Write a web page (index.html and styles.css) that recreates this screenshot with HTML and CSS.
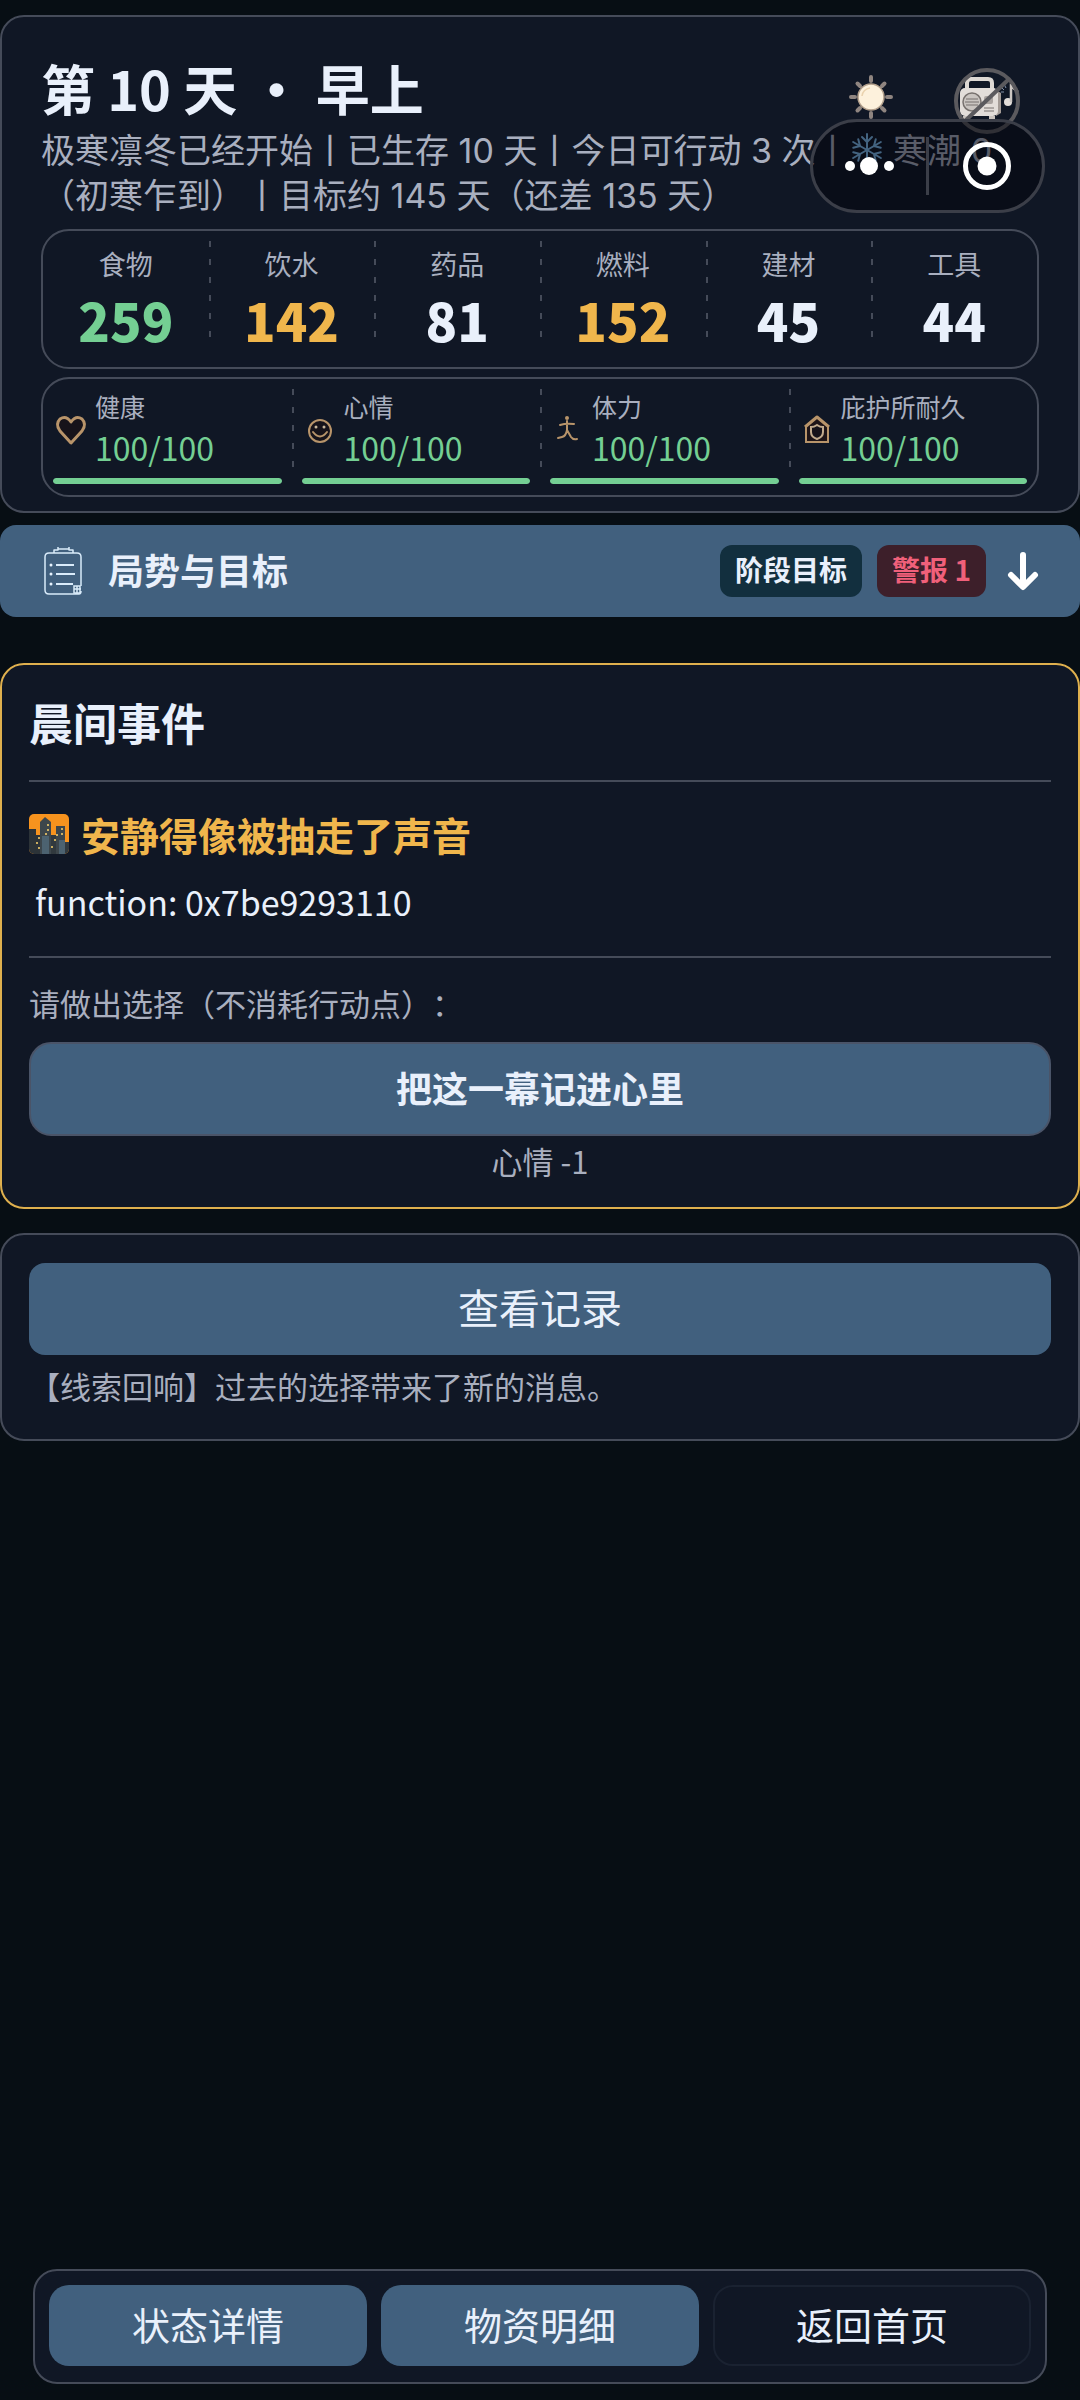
FILE: index.html
```html
<!DOCTYPE html>
<html lang="zh-CN">
<head>
<meta charset="utf-8">
<meta name="viewport" content="width=device-width, initial-scale=1">
<title>第 10 天 · 早上</title>
<link rel="stylesheet" href="styles.css">
</head>
<body>
<div class="app">
  <header class="card status">
    <div class="status-top">
      <h1 class="day">第 10 天 · 早上</h1>
      <div class="tools">
        <button class="tool" type="button" aria-label="主题">
          <svg width="46" height="46" viewBox="0 0 46 46">
            <g stroke="#8f8580" stroke-width="4" stroke-linecap="round">
              <path d="M23 3v4M23 39v4M3 23h4M39 23h4M9.500 9.500l2.500 2.500M34 34l2.500 2.500M9.500 36.500l2.500-2.500M34 12l2.500-2.500"/>
            </g>
            <circle cx="23" cy="23" r="13" fill="#fdf1dc" stroke="#b3a08c" stroke-width="1.500"/>
            <path d="M14 22a9 9 0 0 1 8-8" fill="none" stroke="#ead2ae" stroke-width="1.500"/>
          </svg>
        </button>
        <button class="tool" type="button" aria-label="音乐已关闭">
          <svg width="68" height="68" viewBox="0 0 68 68">
            <path d="M14 23v-6q0-4 4-4h17q4 0 4 4v6" fill="none" stroke="#ddd8d3" stroke-width="4"/>
            <path d="M43 24l5 3v20l-5 3z" fill="#a39b96"/>
            <rect x="7" y="22" width="38" height="28" rx="5" fill="#e2ddd9"/>
            <path d="M10 50h6v3h-6zM36 50h6v3h-6z" fill="#c9c3be"/>
            <circle cx="19" cy="36" r="9" fill="#c9c4c0" stroke="#77716e" stroke-width="1.500"/>
            <path d="M13 33h12M12 36h14M13 39h12" stroke="#77716e" stroke-width="1"/>
            <rect x="31" y="30" width="9" height="8" rx="2" fill="#a9a3a0"/>
            <path d="M31 42h10M31 45h10" stroke="#77716e" stroke-width="1"/>
            <circle cx="55" cy="36" r="4" fill="#e2ddd9"/>
            <path d="M58 36V20l7 6" fill="none" stroke="#ccc6c2" stroke-width="2.500"/>
            <path d="M48 21l3 3M51 18l2 4M48 26h3" stroke="#8292aa" stroke-width="1"/>
            <circle cx="34" cy="35" r="31" fill="none" stroke="#5b5a5e" stroke-width="4"/>
            <path d="M12 55L56 13" stroke="#5b5a5e" stroke-width="4"/>
          </svg>
        </button>
      </div>
    </div>
    <p class="summary">极寒凛冬已经开始丨已生存 10 天丨今日可行动 3 次丨<svg class="snow" width="34" height="34" viewBox="0 0 34 34" role="img" aria-label="雪"><g fill="none" stroke="#7fbdec" stroke-width="2" stroke-linecap="round"><g id="arm"><path d="M17 17V1M12 4l5 5 5-5"/></g><use href="#arm" transform="rotate(60 17 17)"/><use href="#arm" transform="rotate(120 17 17)"/><use href="#arm" transform="rotate(180 17 17)"/><use href="#arm" transform="rotate(240 17 17)"/><use href="#arm" transform="rotate(300 17 17)"/></g></svg> 寒潮 0（初寒乍到）丨目标约 145 天（还差 135 天）</p>

    <dl class="panel resources">
      <div class="resource"><dt>食物</dt><dd class="good">259</dd></div>
      <div class="resource"><dt>饮水</dt><dd class="warn">142</dd></div>
      <div class="resource"><dt>药品</dt><dd>81</dd></div>
      <div class="resource"><dt>燃料</dt><dd class="warn">152</dd></div>
      <div class="resource"><dt>建材</dt><dd>45</dd></div>
      <div class="resource"><dt>工具</dt><dd>44</dd></div>
    </dl>

    <div class="panel vitals">
      <div class="vital">
        <div class="vital-row">
          <svg class="vital-icon" viewBox="0 0 36 36"><path d="M18 31L7 19q-5-7 0-12 6-4 11 3 5-7 11-3 5 5 0 12z" fill="#17131a" stroke="#b8946a" stroke-width="3" stroke-linejoin="round"/></svg>
          <div><label class="vital-name" for="health">健康</label><div class="vital-value">100/100</div></div>
        </div>
        <progress id="health" max="100" value="100"></progress>
      </div>
      <div class="vital">
        <div class="vital-row">
          <svg class="vital-icon" viewBox="0 0 36 36"><circle cx="18" cy="19" r="11" fill="#17131a" stroke="#b8946a" stroke-width="2"/><circle cx="14" cy="15" r="1.500" fill="#c9b79c"/><circle cx="22" cy="15" r="1.500" fill="#c9b79c"/><path d="M11 20q7 9 14 0" fill="none" stroke="#b8946a" stroke-width="2" stroke-linecap="round"/></svg>
          <div><label class="vital-name" for="mood">心情</label><div class="vital-value">100/100</div></div>
        </div>
        <progress id="mood" max="100" value="100"></progress>
      </div>
      <div class="vital">
        <div class="vital-row">
          <svg class="vital-icon" viewBox="0 0 36 36"><g fill="none" stroke="#b8946a" stroke-width="2" stroke-linecap="round" stroke-linejoin="round"><path d="M17 9v9M10 13q6-2 14-1M17 18q-1 6-5 7l-4 1M17 18l4 7q2 3 6 2"/></g><circle cx="17" cy="6" r="2" fill="#b8946a"/></svg>
          <div><label class="vital-name" for="stamina">体力</label><div class="vital-value">100/100</div></div>
        </div>
        <progress id="stamina" max="100" value="100"></progress>
      </div>
      <div class="vital">
        <div class="vital-row">
          <svg class="vital-icon" viewBox="0 0 36 36"><path d="M7 15v15h22V15" fill="#1e1417" stroke="#b8946a" stroke-width="2"/><path d="M6 15L18 5l12 10" fill="#1e1417" stroke="#b8946a" stroke-width="3" stroke-linejoin="round"/><path d="M18 13q3 2 6 2v5q0 5-6 7-6-2-6-7v-5q3 0 6-2z" fill="#17131a" stroke="#c2ab8d" stroke-width="2"/></svg>
          <div><label class="vital-name" for="shelter">庇护所耐久</label><div class="vital-value">100/100</div></div>
        </div>
        <progress id="shelter" max="100" value="100"></progress>
      </div>
    </div>

    <div class="capsule">
      <button class="capsule-button" type="button" aria-label="更多">
        <svg width="52" height="22" viewBox="0 0 52 22" fill="#fff"><circle cx="6" cy="11" r="5"/><circle cx="25" cy="11" r="9"/><circle cx="45" cy="11" r="5"/></svg>
      </button>
      <span class="capsule-line"></span>
      <button class="capsule-button" type="button" aria-label="关闭">
        <svg width="50" height="50" viewBox="0 0 50 50"><circle cx="26" cy="25" r="21.500" fill="none" stroke="#fff" stroke-width="5"/><circle cx="26" cy="25" r="9.500" fill="#fff"/></svg>
      </button>
    </div>
  </header>

  <button class="outlook" type="button" aria-expanded="false">
    <svg class="clipboard" width="38" height="50" viewBox="0 0 38 50" fill="none" stroke="#d9ebfa" stroke-width="1.500">
      <path d="M31 48H5q-4 0-4-4V11q0-4 4-4h28q4 0 4 4v29M10 7V4h4V1M14 3h11M25 1v3h4v3" stroke-linejoin="round"/>
      <g stroke-width="2"><path d="M12 19h18M12 28h19M12 38h17"/></g>
      <path d="M30 40h6v7h-6zM30 43h7M33 40v7M31 48h4q2 0 2-3"/>
      <g fill="#e9f4ff" stroke="none"><circle cx="7" cy="19" r="1.500"/><circle cx="7" cy="28" r="1.500"/><circle cx="7" cy="38" r="1.500"/></g>
    </svg>
    <span class="outlook-title">局势与目标</span>
    <span class="chip">阶段目标</span>
    <span class="chip chip-alert">警报 1</span>
    <svg class="arrow" width="32" height="40" viewBox="0 0 32 40" fill="none" stroke="#fff" stroke-width="6" stroke-linecap="round" stroke-linejoin="round"><path d="M16 4v31M4 24l12 12 12-12"/></svg>
  </button>

  <main>
    <section class="card event">
      <h2 class="event-heading">晨间事件</h2>
      <hr>
      <h3 class="event-title">
        <svg width="40" height="40" viewBox="0 0 40 40" aria-hidden="true">
          <defs><clipPath id="tile"><rect width="40" height="40" rx="5"/></clipPath></defs>
          <g clip-path="url(#tile)">
            <path fill="#f7931e" d="M0 0h40v40H0z"/>
            <path fill="#2c3338" d="M0 15h7v6h5v19H0z"/>
            <path fill="#3d464b" d="M11 8l5-5 6 5v32H11z"/>
            <path fill="#31393e" d="M22 21h5v19h-5zM35 28h5v12h-5z"/>
            <path fill="#3d464b" d="M27 12h9v28h-9z"/>
            <path fill="#4c6270" d="M13 22h7v18h-7zM30 26h6v14h-6z"/>
            <g fill="#ffd66b"><circle cx="19" cy="11" r="1"/><circle cx="19" cy="16" r="1"/><circle cx="17" cy="20" r="1"/><circle cx="10" cy="24" r="1"/><circle cx="8" cy="29" r="1"/><circle cx="10" cy="34" r="1"/><circle cx="33" cy="15" r="1"/><circle cx="33" cy="20" r="1"/><circle cx="28" cy="21" r="1"/><circle cx="26" cy="26" r="1"/><circle cx="23" cy="33" r="1"/></g>
          </g>
        </svg>
        安静得像被抽走了声音
      </h3>
      <p class="event-text">function: 0x7be9293110</p>
      <hr>
      <p class="note prompt">请做出选择（不消耗行动点）：</p>
      <button class="action choice" type="button">把这一幕记进心里</button>
      <p class="note effect">心情 -1</p>
    </section>

    <section class="card log">
      <button class="action log-button" type="button">查看记录</button>
      <p class="note log-line">【线索回响】过去的选择带来了新的消息。</p>
    </section>
  </main>

  <nav class="card dock">
    <button class="dock-button" type="button">状态详情</button>
    <button class="dock-button" type="button">物资明细</button>
    <button class="dock-button dock-plain" type="button">返回首页</button>
  </nav>
</div>
</body>
</html>
```
FILE: styles.css
```css
:root {
  --page: #070e14;
  --card: #101725;
  --line: #454b59;
  --text: #e9f0fb;
  --muted: #a9afbf;
  --blue: #41607e;
  --green: #74cf93;
  --gold: #f0b64c;
}

* {
  box-sizing: border-box;
}

body {
  margin: 0;
  background: var(--page);
  color: var(--text);
  font-family: "Noto Sans CJK SC", sans-serif;
  text-spacing-trim: space-all;
}

h1, h2, h3, p, dl, dd {
  margin: 0;
}

button {
  border: 0;
  padding: 0;
  background: none;
  color: inherit;
  font-family: inherit;
  cursor: pointer;
}

svg {
  display: block;
  flex: none;
}

.app {
  display: flex;
  flex-direction: column;
  min-height: 100vh;
  padding: 15px 0 16px;
}

.card {
  border: 2px solid var(--line);
  border-radius: 24px;
  background: var(--card);
}

/* Status header */

.status {
  position: relative;
  padding: 31px 39px 14px;
}

.status-top {
  display: flex;
  justify-content: space-between;
  align-items: flex-end;
  height: 80px;
}

.day {
  font-size: 54px;
  font-weight: 700;
  line-height: 80px;
}

.tools {
  display: flex;
  gap: 12px;
}

.tool {
  display: grid;
  place-items: center;
  width: 104px;
  height: 62px;
}

.summary {
  color: var(--muted);
  font-family: Inter, "Noto Sans CJK SC", sans-serif;
  font-size: 34px;
  line-height: 45px;
}

.snow {
  display: inline-block;
  vertical-align: -4px;
}

.panel {
  border: 2px solid var(--line);
  border-radius: 28px;
  display: grid;
}

.resources {
  grid-template-columns: repeat(6, 1fr);
  margin-top: 11px;
  padding: 10px 0 14px;
}

.resource {
  text-align: center;
}

.resource + .resource,
.vital + .vital {
  background: repeating-linear-gradient(#454b59 0 6px, transparent 6px 18px) 0 0 / 2px 98px no-repeat;
}

.resource dt {
  color: var(--muted);
  font-size: 27px;
  line-height: 46px;
}

.resource dd {
  font-size: 52px;
  font-weight: 900;
  line-height: 66px;
}

.resource .good {
  color: var(--green);
}

.resource .warn {
  color: var(--gold);
}

.vitals {
  grid-template-columns: repeat(4, 1fr);
  margin-top: 8px;
  padding: 10px 0 11px;
}

.vital {
  padding: 0 10px;
}

.vital + .vital {
  background-size: 2px 90px;
}

.vital-row {
  display: flex;
  align-items: center;
  gap: 6px;
}

.vital-icon {
  width: 36px;
  height: 36px;
}

.vital-name {
  display: block;
  color: var(--muted);
  font-size: 25px;
  line-height: 34px;
}

.vital-value {
  color: var(--green);
  font-size: 32px;
  line-height: 48px;
}

progress {
  appearance: none;
  display: block;
  width: 100%;
  height: 6px;
  margin-top: 7px;
  border: 0;
  border-radius: 3px;
  background: #26303f;
  overflow: hidden;
}

progress::-webkit-progress-bar {
  background: #26303f;
}

progress::-webkit-progress-value {
  border-radius: 3px;
  background: var(--green);
}

/* Host app capsule that floats above the header */

.capsule {
  position: absolute;
  top: 102px;
  right: 33px;
  display: flex;
  align-items: center;
  width: 235px;
  height: 94px;
  border: 3px solid #3b3e48;
  border-radius: 47px;
  background: rgba(2, 3, 10, 0.48);
}

.capsule-button {
  display: grid;
  flex: 1;
  place-items: center;
  height: 100%;
}

.capsule-line {
  width: 3px;
  height: 58px;
  background: #3b3e48;
}

/* Outlook bar */

.outlook {
  display: flex;
  align-items: center;
  height: 92px;
  margin-top: 12px;
  padding: 0 41px 0 44px;
  border-radius: 16px;
  background: var(--blue);
}

.outlook-title {
  flex: 1;
  margin-left: 26px;
  padding-bottom: 4px;
  font-size: 36px;
  font-weight: 700;
  text-align: left;
}

.chip {
  margin-left: 15px;
  padding: 0 15px 4px;
  border-radius: 12px;
  background: #122f3e;
  font-size: 28px;
  font-weight: 700;
  line-height: 48px;
}

.chip-alert {
  background: #3d1f2a;
  color: #f0607a;
}

.arrow {
  margin-left: 21px;
}

/* Event card */

.event {
  margin-top: 46px;
  padding: 27px 27px 24px;
  border-color: #dfb04e;
}

.event hr {
  height: 2px;
  margin: 0;
  border: 0;
  background: var(--line);
}

.event-heading {
  margin-bottom: 28px;
  font-size: 44px;
  font-weight: 700;
  line-height: 60px;
}

.event-title {
  display: flex;
  align-items: center;
  gap: 12px;
  margin-top: 24px;
  color: var(--gold);
  font-size: 39px;
  font-weight: 700;
  line-height: 56px;
}

.event-text {
  margin: 16px 0 30px;
  padding-left: 6px;
  font-size: 34px;
  line-height: 48px;
}

.note {
  color: var(--muted);
  font-size: 31px;
  line-height: 44px;
}

.prompt {
  margin: 23px 0 17px;
}

.effect {
  margin-top: 3px;
  text-align: center;
}

.action {
  display: block;
  width: 100%;
  height: 92px;
  padding-bottom: 6px;
  border-radius: 16px;
  background: var(--blue);
}

.choice {
  height: 94px;
  padding-bottom: 4px;
  border: 2px solid #4a5468;
  border-radius: 22px;
  font-size: 36px;
  font-weight: 700;
}

/* Log card */

.log {
  margin-top: 24px;
  padding: 28px 27px 31px;
}

.log-button {
  font-size: 41px;
}

.log-line {
  margin-top: 9px;
}

/* Bottom dock */

.dock {
  display: grid;
  grid-template-columns: repeat(3, 1fr);
  gap: 14px;
  margin: auto 33px 0;
  padding: 14px 14px 16px;
}

.dock-button {
  height: 81px;
  padding-bottom: 4px;
  border-radius: 20px;
  background: var(--blue);
  font-size: 38px;
}

.dock-plain {
  border: 2px solid #1a2231;
  background: none;
}
```
